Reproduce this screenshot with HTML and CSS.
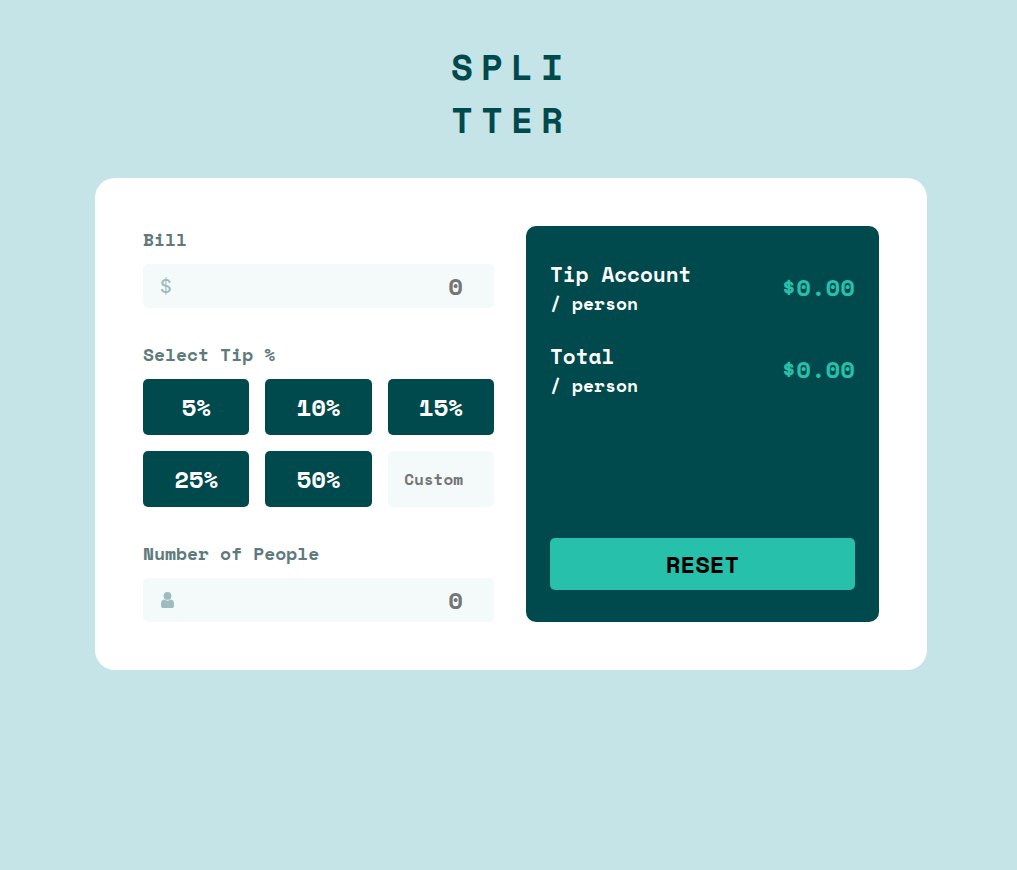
FILE: index.html
```html
<!DOCTYPE html>
<html lang="en">
<head>
  <meta charset="utf-8">
  <meta name="viewport" content="width=device-width, initial-scale=1">
  <title>Splitter</title>
  <link rel="stylesheet" href="styles.css">
</head>
<body>
  <main class="page">
    <h1 class="logo">SPLI<br>TTER</h1>
    <div class="card">
      <form class="form">
        <div class="group">
          <label class="label" for="bill">Bill</label>
          <div class="field">
            <span class="dollar" aria-hidden="true">$</span>
            <input class="input" id="bill" type="text" inputmode="decimal" placeholder="0">
          </div>
        </div>
        <div class="group" role="group" aria-labelledby="tip-label">
          <label class="label" id="tip-label" for="custom">Select Tip %</label>
          <div class="tips">
            <button class="tip" type="button">5%</button>
            <button class="tip" type="button">10%</button>
            <button class="tip" type="button">15%</button>
            <button class="tip" type="button">25%</button>
            <button class="tip" type="button">50%</button>
            <input class="input custom" id="custom" type="text" inputmode="numeric" placeholder="Custom">
          </div>
        </div>
        <div class="group">
          <label class="label" for="people">Number of People</label>
          <div class="field">
            <svg class="person" viewBox="0 0 13 16" width="13" height="16" aria-hidden="true">
              <circle cx="6.5" cy="3.9" r="3.9"/>
              <path d="M3 7.6C4 8.300 5.200 8.700 6.500 8.700S9 8.300 10 7.600C12 7.700 13 9.500 13 12V13.400C13 15 12.100 16 10.500 16H2.500C.9 16 0 15 0 13.400V12C0 9.500 1 7.700 3 7.600Z"/>
            </svg>
            <input class="input" id="people" type="text" inputmode="numeric" placeholder="0">
          </div>
        </div>
      </form>
      <section class="panel" aria-label="Result">
        <div class="results">
          <div class="row">
            <div>
              <h2 class="title">Tip Account</h2>
              <p class="sub">/ person</p>
            </div>
            <output class="amount">$0.00</output>
          </div>
          <div class="row">
            <div>
              <h2 class="title">Total</h2>
              <p class="sub">/ person</p>
            </div>
            <output class="amount">$0.00</output>
          </div>
        </div>
        <button class="reset" type="button">RESET</button>
      </section>
    </div>
  </main>
</body>
</html>
```
FILE: styles.css
```css
* {
  box-sizing: border-box;
  margin: 0;
}

body {
  min-height: 100vh;
  background: #c5e4e7;
  font-family: "Space Mono", "Liberation Mono", monospace;
  font-weight: 700;
  font-size: 18px;
}

button,
input {
  font: inherit;
  border: 0;
  border-radius: 5px;
}

.page {
  display: flex;
  flex-direction: column;
  align-items: center;
  gap: 32px;
  padding: 40px 0 40px 5px;
}

.logo {
  color: #00494d;
  font-size: 36px;
  line-height: 53px;
  letter-spacing: 8px;
}

.card {
  display: grid;
  grid-template-columns: 351fr 353fr;
  gap: 32px;
  width: 100%;
  max-width: 832px;
  padding: 48px;
  border-radius: 20px;
  background: #fff;
}

.form {
  display: flex;
  flex-direction: column;
  gap: 33px;
}

.group {
  display: flex;
  flex-direction: column;
  gap: 11px;
}

.label {
  color: #5e7a7d;
  line-height: 27px;
}

.field {
  display: flex;
  align-items: center;
  height: 44px;
  padding-left: 17px;
  border-radius: 5px;
  background: #f4fafa;
}

.dollar {
  color: #9ebbbd;
  font-family: Inter, "Liberation Sans", sans-serif;
  font-size: 18px;
  font-weight: 500;
}

.person {
  flex: none;
  margin-left: 1px;
  fill: #9ebbbd;
}

.input {
  flex: 1;
  width: 100%;
  min-width: 0;
  height: 100%;
  padding: 0 31px 0 16px;
  background: #f4fafa;
  color: #00494d;
  font-size: 24px;
  text-align: right;
}

.input::placeholder {
  color: #757575;
  opacity: 1;
}

.tips {
  display: grid;
  grid-template-columns: repeat(3, 1fr);
  grid-auto-rows: 56px;
  gap: 16px;
}

.tip {
  background: #00494d;
  color: #fff;
  font-size: 24px;
}

.custom {
  padding-left: 8px;
  font-size: 16px;
}

.panel {
  display: flex;
  flex-direction: column;
  justify-content: space-between;
  gap: 32px;
  padding: 32px 24px;
  border-radius: 10px;
  background: #00494d;
  color: #fff;
}

.results {
  display: flex;
  flex-direction: column;
  gap: 23px;
}

.row {
  display: flex;
  align-items: center;
  justify-content: space-between;
}

.title {
  font-size: 21px;
  line-height: 32px;
}

.sub {
  line-height: 27px;
}

.amount {
  color: #26c0ab;
  font-size: 24px;
  line-height: 35px;
}

.reset {
  height: 52px;
  background: #26c0ab;
  color: #000;
  font-size: 24px;
}
```
